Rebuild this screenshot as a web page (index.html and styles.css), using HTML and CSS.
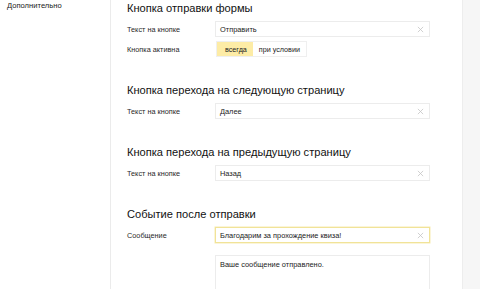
FILE: index.html
```html
<!DOCTYPE html>
<html lang="ru">
<head>
<meta charset="utf-8">
<link rel="stylesheet" href="styles.css">
</head>
<body>
<div class="page">
  <aside class="sidebar">
    <div class="nav-item">Дополнительно</div>
  </aside>
  <main class="main">
    <section class="section">
      <h2 class="title">Кнопка отправки формы</h2>
      <div class="row">
        <div class="label">Текст на кнопке</div>
        <div class="input"><span class="value">Отправить</span><svg class="clear" viewBox="0 0 8 8"><path d="M1 1L7 7M7 1L1 7"/></svg></div>
      </div>
      <div class="row">
        <div class="label">Кнопка активна</div>
        <div class="toggle"><span class="opt on">всегда</span><span class="opt">при условии</span></div>
      </div>
    </section>
    <section class="section">
      <h2 class="title">Кнопка перехода на следующую страницу</h2>
      <div class="row">
        <div class="label">Текст на кнопке</div>
        <div class="input"><span class="value">Далее</span><svg class="clear" viewBox="0 0 8 8"><path d="M1 1L7 7M7 1L1 7"/></svg></div>
      </div>
    </section>
    <section class="section">
      <h2 class="title">Кнопка перехода на предыдущую страницу</h2>
      <div class="row">
        <div class="label">Текст на кнопке</div>
        <div class="input"><span class="value">Назад</span><svg class="clear" viewBox="0 0 8 8"><path d="M1 1L7 7M7 1L1 7"/></svg></div>
      </div>
    </section>
    <section class="section">
      <h2 class="title">Событие после отправки</h2>
      <div class="row">
        <div class="label">Сообщение</div>
        <div class="input focused"><span class="value">Благодарим за прохождение квиза!</span><svg class="clear" viewBox="0 0 8 8"><path d="M1 1L7 7M7 1L1 7"/></svg></div>
      </div>
      <div class="row row-text">
        <div class="label"></div>
        <div class="textarea">Ваше сообщение отправлено.</div>
      </div>
    </section>
  </main>
  <div class="aside-right"></div>
</div>
</body>
</html>
```

FILE: styles.css
```css
html, body {
  margin: 0;
  padding: 0;
  background: #fff;
  font-family: "Liberation Sans", Arial, sans-serif;
  color: #1a1a1a;
}
.page {
  display: flex;
  height: 289px;
  overflow: hidden;
}
.sidebar {
  flex: none;
  width: 111px;
  border-right: 1px solid #ebebeb;
  padding: 1px 0 0 7px;
  box-sizing: border-box;
}
.nav-item {
  font-size: 7.6px;
  line-height: 10px;
  color: #222;
}
.main {
  width: 351px;
  flex: none;
  padding: 1px 0 0 16px;
  box-sizing: border-box;
}
.aside-right {
  flex: 1;
  background: #f6f6f6;
  border-left: 1px solid #ededed;
}
.section {
  margin-bottom: 26px;
}
.title {
  margin: 0 0 6px;
  font-weight: normal;
  font-size: 11.1px;
  line-height: 14px;
  color: #111;
}
.row {
  display: flex;
  align-items: center;
  margin-bottom: 4px;
}
.row-text {
  margin-top: 12px;
  align-items: flex-start;
}
.label {
  width: 88px;
  flex: none;
  font-size: 7.3px;
  color: #2a2a2a;
}
.input {
  width: 215px;
  height: 16px;
  box-sizing: border-box;
  border: 1px solid #ececec;
  display: flex;
  align-items: center;
  padding: 0 3px 0 4px;
}
.input.focused {
  border-color: #f1e398;
  box-shadow: 0 0 0 0.5px #f6eab0;
}
.value {
  flex: 1;
  font-size: 7.4px;
  color: #222;
}
.clear {
  width: 7px;
  height: 7px;
  margin-right: 2px;
  stroke: #c4c4c4;
  stroke-width: 0.9;
  fill: none;
}
.toggle {
  display: flex;
  height: 16px;
  border: 1px solid #efefef;
  box-sizing: border-box;
  margin-left: 1px;
}
.opt {
  display: flex;
  align-items: center;
  padding: 0 6px;
  font-size: 7.2px;
  color: #222;
}
.opt.on {
  background: #fdeca6;
  padding: 0 6px 0 8px;
}
.textarea {
  width: 215px;
  height: 50px;
  box-sizing: border-box;
  border: 1px solid #ececec;
  padding: 4px 4px;
  font-size: 7.4px;
  color: #222;
}
```
